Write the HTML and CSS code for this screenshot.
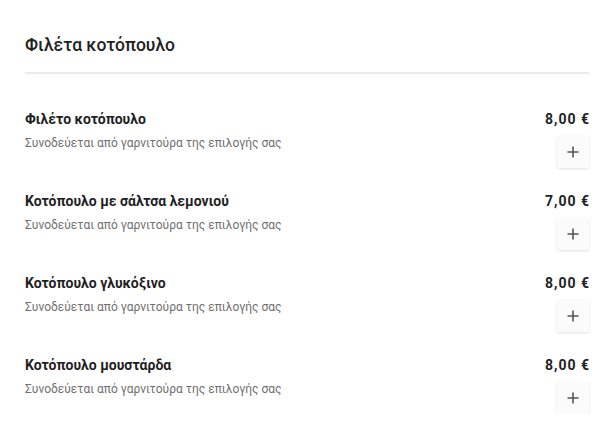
FILE: index.html
```html
<!DOCTYPE html>
<html lang="el">
<head>
<meta charset="utf-8">
<link rel="stylesheet" href="styles.css">
</head>
<body>
<section class="menu">
  <h2 class="title">Φιλέτα κοτόπουλο</h2>
  <div class="divider"></div>
  <ul class="items">
    <li class="item">
      <div class="info">
        <div class="name">Φιλέτο κοτόπουλο</div>
        <div class="desc">Συνοδεύεται από γαρνιτούρα της επιλογής σας</div>
      </div>
      <div class="side">
        <div class="price">8,00 €</div>
        <button class="add" aria-label="add"><svg width="12" height="12" viewBox="0 0 12 12"><path d="M6 0.5v11M0.5 6h11" stroke="#555" stroke-width="1.6"/></svg></button>
      </div>
    </li>
    <li class="item">
      <div class="info">
        <div class="name">Κοτόπουλο με σάλτσα λεμονιού</div>
        <div class="desc">Συνοδεύεται από γαρνιτούρα της επιλογής σας</div>
      </div>
      <div class="side">
        <div class="price">7,00 €</div>
        <button class="add" aria-label="add"><svg width="12" height="12" viewBox="0 0 12 12"><path d="M6 0.5v11M0.5 6h11" stroke="#555" stroke-width="1.6"/></svg></button>
      </div>
    </li>
    <li class="item">
      <div class="info">
        <div class="name">Κοτόπουλο γλυκόξινο</div>
        <div class="desc">Συνοδεύεται από γαρνιτούρα της επιλογής σας</div>
      </div>
      <div class="side">
        <div class="price">8,00 €</div>
        <button class="add" aria-label="add"><svg width="12" height="12" viewBox="0 0 12 12"><path d="M6 0.5v11M0.5 6h11" stroke="#555" stroke-width="1.6"/></svg></button>
      </div>
    </li>
    <li class="item">
      <div class="info">
        <div class="name">Κοτόπουλο μουστάρδα</div>
        <div class="desc">Συνοδεύεται από γαρνιτούρα της επιλογής σας</div>
      </div>
      <div class="side">
        <div class="price">8,00 €</div>
        <button class="add" aria-label="add"><svg width="12" height="12" viewBox="0 0 12 12"><path d="M6 0.5v11M0.5 6h11" stroke="#555" stroke-width="1.6"/></svg></button>
      </div>
    </li>
  </ul>
</section>
</body>
</html>
```

FILE: styles.css
```css
html, body {
  margin: 0;
  padding: 0;
  background: #fff;
}
body {
  font-family: Roboto, "Noto Sans", sans-serif;
  color: #1f1f1f;
}
.menu {
  padding: 33px 10px 0 25px;
}
.title {
  margin: 0;
  font-size: 17.5px;
  line-height: 24px;
  font-weight: 500;
  color: #222;
}
.divider {
  margin-top: 15px;
  height: 2px;
  background: #ebebeb;
}
.items {
  list-style: none;
  margin: 35px 0 0;
  padding: 0;
  display: flex;
  flex-direction: column;
  gap: 23px;
}
.item {
  display: flex;
  justify-content: space-between;
  align-items: flex-start;
}
.info {
  display: flex;
  flex-direction: column;
  gap: 6px;
}
.name {
  font-size: 14px;
  line-height: 20px;
  font-weight: 700;
  color: #1f1f1f;
}
.desc {
  font-size: 12px;
  line-height: 16px;
  color: #707070;
}
.side {
  display: flex;
  flex-direction: column;
  align-items: flex-end;
  gap: 7px;
}
.price {
  font-size: 14px;
  line-height: 20px;
  font-weight: 700;
  letter-spacing: 1px;
  margin-right: -1px;
  color: #222;
}
.add {
  width: 32px;
  height: 32px;
  padding: 0;
  border: none;
  border-radius: 2px;
  background: #fbfbfb;
  box-shadow: 0 1px 3px rgba(0,0,0,0.12);
  display: flex;
  align-items: center;
  justify-content: center;
}
```
